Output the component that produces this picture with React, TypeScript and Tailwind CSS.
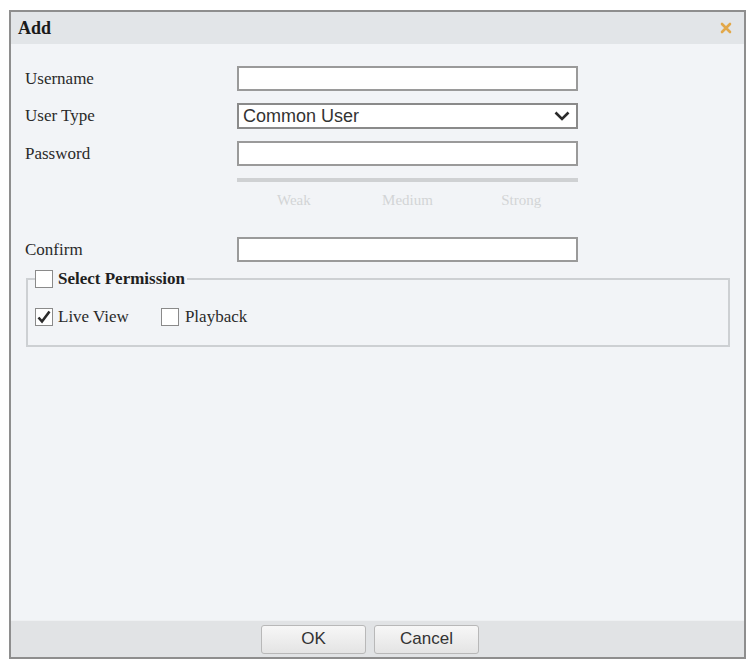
import type { ReactNode } from 'react'

const serif = "font-['Liberation_Serif','Times_New_Roman',serif]"
const sans = "font-['Liberation_Sans',Arial,sans-serif]"

function Box({ checked = false }: { checked?: boolean }) {
	return (
		<span className="w-[18px] h-[18px] border border-[#8a8a8a] bg-white flex items-center justify-center shrink-0">
			{checked && (
				<svg width="16" height="16" viewBox="0 0 16 16">
					<path d="M2.5 8.5 L6 12.5 L13.5 2.5" fill="none" stroke="#2b2b2b" strokeWidth="2.6" />
				</svg>
			)}
		</span>
	)
}

function Row({ label, children, className = '' }: { label: string; children: ReactNode; className?: string }) {
	return (
		<div className={`flex items-center ${className}`}>
			<div className={`w-[212px] text-[17px] text-[#2a2a2a] ${serif}`}>{label}</div>
			{children}
		</div>
	)
}

function TextInput() {
	return <div className="w-[341px] h-[25px] border-2 border-[#9a9a9a] bg-white"></div>
}

export default function App() {
	return (
		<div className="w-[748px] h-[662px] bg-white pt-[10px] pl-[9px]">
			<div className="w-[737px] h-[649px] border-2 border-[#8e8e8e] flex flex-col bg-[#f2f4f7]">
				{/* Título */}
				<div className="h-[32px] bg-[#e2e5e8] flex items-center justify-between pl-[7px] pr-[12px]">
					<span className={`text-[18px] font-bold text-[#1a1a1a] ${serif}`}>Add</span>
					<svg width="12" height="12" viewBox="0 0 12 12">
						<path d="M2 2 L10 10 M10 2 L2 10" stroke="#e2a84a" strokeWidth="2.6" strokeLinecap="round" />
					</svg>
				</div>

				{/* Formulário */}
				<div className="flex-1 pt-[22px] pl-[14px]">
					<Row label="Username">
						<TextInput />
					</Row>
					<Row label="User Type" className="mt-[11px]">
						<div className="w-[341px] h-[26px] border-2 border-[#8a8a8a] bg-white flex items-center justify-between pl-[4px] pr-[6px]">
							<span className={`text-[18px] leading-none text-[#333] ${sans}`}>Common User</span>
							<svg width="16" height="10" viewBox="0 0 16 10">
								<path d="M1.5 1.5 L8 8 L14.5 1.5" fill="none" stroke="#2a2a2a" strokeWidth="2.6" />
							</svg>
						</div>
					</Row>
					<Row label="Password" className="mt-[12px]">
						<TextInput />
					</Row>
					<div className="ml-[212px] w-[341px] mt-[12px] h-[4px] bg-[#cfd1d3]"></div>
					<div className={`ml-[212px] w-[341px] mt-[10px] grid grid-cols-3 text-center text-[15px] leading-[16px] text-[#d2d4d6] ${serif}`}>
						<span>Weak</span>
						<span>Medium</span>
						<span>Strong</span>
					</div>
					<Row label="Confirm" className="mt-[29px]">
						<TextInput />
					</Row>

					<fieldset className="ml-[1px] mr-[14px] mt-[7px] border-2 border-[#cdd0d3] px-[7px] pt-[20px] pb-[19px]">
						<legend className="p-0 pr-[2px]">
							<span className="flex items-center gap-[5px]">
								<Box />
								<span className={`text-[17px] leading-[18px] font-bold text-[#1f1f1f] ${serif}`}>Select Permission</span>
							</span>
						</legend>
						<div className={`flex items-center text-[17px] leading-[18px] text-[#2a2a2a] ${serif}`}>
							<Box checked />
							<span className="ml-[5px]">Live View</span>
							<span className="ml-[32px]">
								<Box />
							</span>
							<span className="ml-[6px]">Playback</span>
						</div>
					</fieldset>
				</div>

				{/* Rodapé */}
				<div className="h-[37px] bg-[#e1e3e5] border-t border-[#eef0f2] flex items-center pl-[250px] gap-[8px]">
					<button className={`w-[105px] h-[29px] rounded-[3px] border border-[#b8b8b8] bg-gradient-to-b from-[#f7f7f7] to-[#e4e4e4] text-[17px] text-[#333] ${sans}`}>
						OK
					</button>
					<button className={`w-[105px] h-[29px] rounded-[3px] border border-[#b8b8b8] bg-gradient-to-b from-[#f7f7f7] to-[#e4e4e4] text-[17px] text-[#333] ${sans}`}>
						Cancel
					</button>
				</div>
			</div>
		</div>
	)
}
